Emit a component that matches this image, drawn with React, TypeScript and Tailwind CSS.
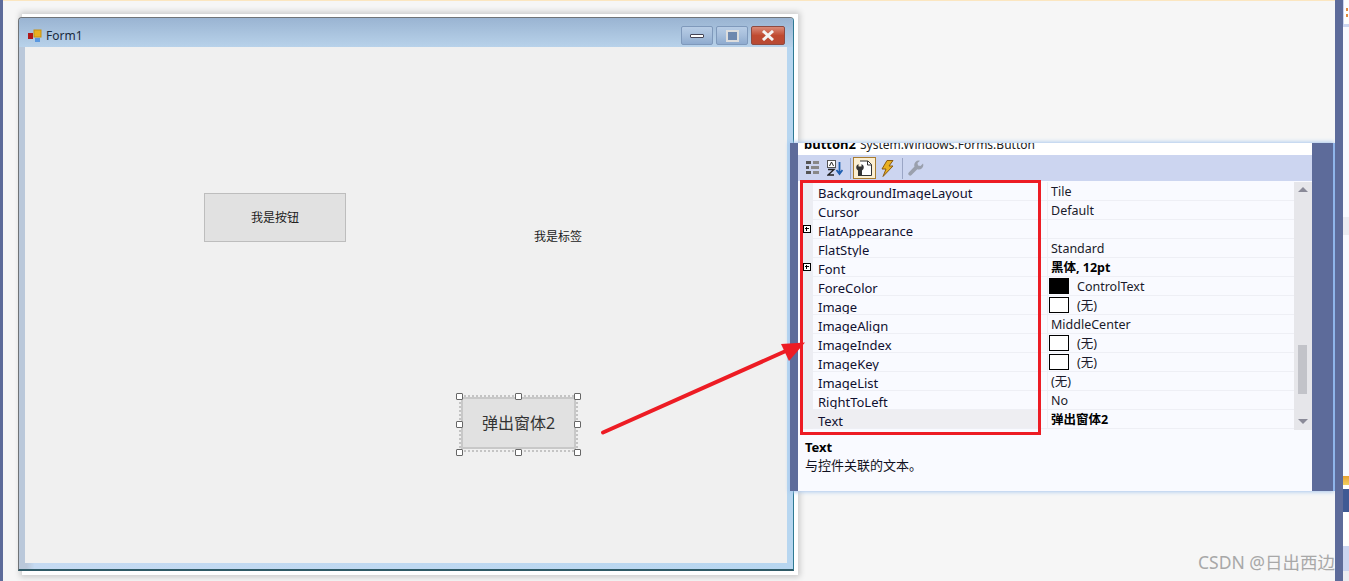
import React from "react";

const sans = "font-['Noto_Sans','Noto_Sans_CJK_SC',sans-serif]";

type Row = { name: string; value?: string; swatch?: "black" | "empty"; bold?: boolean; plus?: boolean; selected?: boolean };

const rows: Row[] = [
  { name: "BackgroundImageLayout", value: "Tile" },
  { name: "Cursor", value: "Default" },
  { name: "FlatAppearance", plus: true },
  { name: "FlatStyle", value: "Standard" },
  { name: "Font", value: "黑体, 12pt", bold: true, plus: true },
  { name: "ForeColor", value: "ControlText", swatch: "black" },
  { name: "Image", value: "(无)", swatch: "empty" },
  { name: "ImageAlign", value: "MiddleCenter" },
  { name: "ImageIndex", value: "(无)", swatch: "empty" },
  { name: "ImageKey", value: "(无)", swatch: "empty" },
  { name: "ImageList", value: "(无)" },
  { name: "RightToLeft", value: "No" },
  { name: "Text", value: "弹出窗体2", bold: true, selected: true },
];

function PropertyRow({ row }: { row: Row }) {
  return (
    <div className="flex h-[19px] shrink-0">
      <div className={`relative w-[12px] shrink-0 ${row.selected ? "bg-[#eeeef2]" : "bg-[#ecedf3]"}`}>
        {row.plus && (
          <span className="absolute left-[2px] top-[5px] h-[8px] w-[8px] border border-black bg-white">
            <span className="absolute left-[1px] top-[2px] h-px w-[4px] bg-black" />
            <span className="absolute left-[2px] top-[1px] h-[4px] w-px bg-black" />
          </span>
        )}
      </div>
      <div className={`w-[227px] shrink-0 overflow-hidden border-b border-[#eeeff5] pl-[5px] text-[13px] leading-[23px] text-[#101030] ${row.selected ? "bg-[#eeeef2]" : ""}`}>
        {row.name}
      </div>
      <div className="w-[7px] shrink-0 border-b border-[#eeeff5]" />
      <div className="flex min-w-0 flex-1 items-center border-b border-l border-[#eeeff5] text-[12.5px] leading-[17px] text-[#1a1a2a]">
        {row.swatch ? (
          <>
            <span className={`ml-[1px] h-[16px] w-[20px] shrink-0 border border-black ${row.swatch === "black" ? "bg-black" : "bg-white"}`} />
            <span className="ml-[8px]">{row.value}</span>
          </>
        ) : (
          <span className={`ml-[3px] ${row.bold ? "font-bold text-black" : ""}`}>{row.value}</span>
        )}
      </div>
    </div>
  );
}

function Toolbar() {
  return (
    <div className="flex h-[26px] shrink-0 items-center bg-[#ccd5f0] pl-[8px]">
      <svg width="14" height="14" viewBox="0 0 14 14" className="shrink-0">
        <rect x="0" y="0" width="5" height="3" fill="#555" />
        <rect x="7" y="0" width="6" height="3" fill="#888" />
        <rect x="0" y="5" width="3" height="3" fill="#555" />
        <rect x="5" y="5" width="8" height="3" fill="#888" />
        <rect x="0" y="10" width="5" height="3" fill="#555" />
        <rect x="7" y="10" width="6" height="3" fill="#888" />
      </svg>
      <svg width="16" height="16" viewBox="0 0 16 16" className="ml-[7px] shrink-0">
        <rect x="0.5" y="0.5" width="8" height="7" fill="#fff" stroke="#555" strokeWidth="1" />
        <path d="M2.5 6 L4.5 2 L6.5 6" fill="none" stroke="#222" strokeWidth="1" />
        <path d="M1 9.5 H7 L1 15 H7" fill="none" stroke="#222" strokeWidth="1.4" />
        <path d="M12.5 2 V13 M9.5 10 L12.5 14 L15.5 10" fill="none" stroke="#1f5fb0" strokeWidth="1.8" />
      </svg>
      <span className="ml-[7px] h-[21px] w-px bg-[#9aa5c5]" />
      <span className="ml-[2px] flex h-[22px] w-[23px] items-center justify-center border border-[#a87c30] bg-[#fbefd2]">
        <svg width="17" height="17" viewBox="0 0 17 17">
          <path d="M4 1 H12 L15.5 4.5 V15.5 H6" fill="#fff" stroke="#333" strokeWidth="1" />
          <path d="M11.5 1 V5 H15.5" fill="none" stroke="#333" strokeWidth="1" />
          <path d="M2.5 4 V6.5 H5.5 V4 A3.6 3.6 0 0 1 6 10.5 V16 H2 V10.5 A3.6 3.6 0 0 1 2.5 4 Z" fill="#333" />
        </svg>
      </span>
      <svg width="15" height="17" viewBox="0 0 15 17" className="ml-[4px] shrink-0">
        <path d="M7 0.5 H13 L9 6 H13 L3 16.5 L6 9 H2 Z" fill="#e8b020" stroke="#8a5a10" strokeWidth="1" />
      </svg>
      <span className="ml-[7px] h-[21px] w-px bg-[#9aa5c5]" />
      <svg width="16" height="16" viewBox="0 0 16 16" className="ml-[5px] shrink-0">
        <path d="M15 3.5 L12.5 6 L10 5.5 L9.5 3 L12 0.7 A4.5 4.5 0 0 0 6.5 6.5 L0.8 12.5 A1.8 1.8 0 0 0 3.5 15 L9.3 9.3 A4.5 4.5 0 0 0 15 3.5 Z" fill="#9aa0ad" />
      </svg>
    </div>
  );
}

function PropertyPanel() {
  return (
    <div className={`absolute left-[790px] top-[143px] flex h-[348px] w-[543px] shadow-[0_0_4px_1px_#a9c8ee] ${sans}`}>
      <div className="w-[8px] shrink-0 bg-[#5d6b9a]" />
      <div className="flex w-[514px] shrink-0 flex-col bg-[#f9faff]">
        <div className="h-[12px] shrink-0 overflow-hidden whitespace-nowrap bg-white pl-[6px] text-[12px] leading-[3px] text-[#222]">
          <b className="text-[13px] text-black">button2</b>
          <span className="ml-[4px]">System.Windows.Forms.Button</span>
        </div>
        <Toolbar />
        <div className="flex h-[249px] shrink-0 pl-[3px] pt-px">
          <div className="flex w-[493px] shrink-0 flex-col">
            {rows.map((r) => (
              <PropertyRow key={r.name} row={r} />
            ))}
          </div>
          <div className="relative w-[18px] shrink-0 bg-[#e6e6ea]">
            <span className="absolute left-[4px] top-[5px] h-0 w-0 border-x-[5px] border-b-[5px] border-x-transparent border-b-[#8a8a98]" />
            <span className="absolute left-[4px] top-[163px] h-[49px] w-[9px] bg-[#c2c3c9]" />
            <span className="absolute left-[4px] top-[237px] h-0 w-0 border-x-[5px] border-t-[5px] border-x-transparent border-t-[#8a8a98]" />
          </div>
        </div>
        <div className="pl-[7px] pt-[8px] text-[13px] leading-[18px] text-[#101020]">
          <div className="font-bold text-black">Text</div>
          <div>与控件关联的文本。</div>
        </div>
      </div>
      <div className="flex-1 bg-[#5d6b9a]" />
    </div>
  );
}

function Handle({ x, y }: { x: number; y: number }) {
  return (
    <span
      className="absolute h-[7px] w-[7px] rounded-[1px] border border-[#666] bg-white"
      style={{ left: x - 3, top: y - 3 }}
    />
  );
}

function CaptionButton({ children, close, w }: { children: React.ReactNode; close?: boolean; w: string }) {
  return (
    <div
      className={`flex h-[19px] items-center justify-center rounded-[2px] border ${w} ${
        close
          ? "border-[#8e4a40] bg-gradient-to-b from-[#d98a78] via-[#c04a30] to-[#b84a34]"
          : "border-[#7f99bb] bg-gradient-to-b from-[#b8cde6] via-[#a6bedb] to-[#8fabcf]"
      }`}
    >
      {children}
    </div>
  );
}

function FormWindow() {
  return (
    <>
      <div className="absolute left-[22px] top-[14px] h-[561px] w-[776px] bg-white shadow-[0_0_6px_2px_rgba(0,0,0,0.18)]" />
      <div className={`absolute left-[18px] top-[17px] flex h-[554px] w-[776px] flex-col rounded-t-[4px] border border-b-2 border-[#707478] border-b-[#2f5a66] border-r-[#2e7a94] bg-gradient-to-r from-[#bac8da] from-[1%] via-[#c5daf2] via-[2%] to-[#b7d6f0] ${sans}`}>
        <div className="flex h-[29px] shrink-0 rounded-t-[4px] bg-gradient-to-b from-[#9ab4d2] to-[#b8d2ea] pl-[9px] pr-[8px]">
          <div className="flex h-full items-center pt-[6px]">
            <svg width="14" height="14" viewBox="0 0 14 14" className="shrink-0">
              <rect x="0" y="4" width="5" height="6" fill="#b01818" />
              <rect x="6" y="1" width="7" height="7" fill="#e8b020" stroke="#c89010" />
              <rect x="7" y="9" width="5" height="4" fill="#5a98e0" />
            </svg>
            <span className="ml-[4px] text-[12px] leading-none text-[#1a2a3c]">Form1</span>
          </div>
          <div className="ml-auto flex gap-[3px] pt-[8px]">
            <CaptionButton w="w-[32px]">
              <span className="h-[4px] w-[14px] rounded-[1px] border border-[#445] bg-white" />
            </CaptionButton>
            <CaptionButton w="w-[32px]">
              <span className="h-[12px] w-[13px] border-2 border-[#ddd] bg-[#6e88ae]" />
            </CaptionButton>
            <CaptionButton w="w-[34px]" close>
              <svg width="14" height="11" viewBox="0 0 14 11">
                <path d="M2 1 L12 10 M12 1 L2 10" stroke="#f4f4f4" strokeWidth="3" />
              </svg>
            </CaptionButton>
          </div>
        </div>
        <div className="flex flex-1 pl-[6px] pr-[6px] pb-[6px]">
          <div className="relative flex-1 bg-[#f0f0f0]">
            <div className="absolute left-[179px] top-[146px] flex h-[49px] w-[142px] items-center justify-center border border-[#bdbdbd] bg-[#e1e1e1] text-[12px] text-[#222]">
              我是按钮
            </div>
            <div className="absolute left-[509px] top-[181px] text-[12px] leading-[17px] text-[#222]">我是标签</div>
            <div className="absolute left-[434px] top-[348px] h-[57px] w-[119px] border-2 border-dotted border-[#c4c4c4]" />
            <div className="absolute left-[436px] top-[350px] flex h-[52px] w-[115px] items-center justify-center border-2 border-[#c8c8c8] bg-[#e1e1e1] text-[16px] text-[#333]">
              弹出窗体2
            </div>
            {[434, 493, 552].map((x) =>
              [349, 377, 405].map((y) =>
                x === 493 && y === 377 ? null : <Handle key={`${x}-${y}`} x={x} y={y} />
              )
            )}
          </div>
        </div>
      </div>
    </>
  );
}

function RightEdge() {
  return (
    <div className="absolute bottom-0 left-[1335px] top-0 flex w-[14px]">
      <div className="w-[8px] shrink-0 bg-[#5d6b9a]" />
      <div className="flex w-[6px] shrink-0 flex-col bg-[#f9faff]">
        <div className="h-[24px] shrink-0 border-l border-[#ccd5f0] bg-white pt-[8px] pl-[2px]">
          <div className="h-[3px] w-[2px] bg-[#e08a40]" />
          <div className="mt-[3px] h-[3px] w-[2px] bg-[#e08a40]" />
        </div>
        <div className="h-[3px] shrink-0 bg-[#ccd5f0]" />
        <div className="h-[190px] shrink-0" />
        <div className="h-[18px] shrink-0 bg-[#ececf2]" />
        <div className="h-[241px] shrink-0" />
        <div className="h-[9px] shrink-0 bg-gradient-to-b from-[#e8a030] to-[#f0d060]" />
        <div className="h-[4px] shrink-0 bg-white" />
        <div className="h-[23px] shrink-0 bg-[#3f5a94]" />
        <div className="h-[34px] shrink-0 bg-white" />
        <div className="h-[25px] shrink-0 bg-[#ccd5f0]" />
        <div className="flex-1 bg-[#eeeef2]" />
      </div>
    </div>
  );
}

export default function App() {
  return (
    <div className="relative h-[581px] w-[1349px] overflow-hidden bg-[#f6f6f6]">
      <div className="absolute inset-x-0 top-0 h-px bg-[#fbe6c0]" />
      <div className="absolute bottom-0 left-0 top-0 w-[3px] bg-[#5d6b9a]" />
      <FormWindow />
      <PropertyPanel />
      <div className="absolute left-[1333px] top-[143px] h-[348px] w-[2px] bg-[#8fb5ea]" />
      <RightEdge />
      <div className="absolute left-[800px] top-[180px] h-[255px] w-[241px] border-[3.5px] border-[#ed1c24]" />
      <svg className="absolute left-[596px] top-[335px]" width="215" height="105" viewBox="0 0 215 105">
        <path d="M7 97.5 L192 15" stroke="#ed1c24" strokeWidth="4" strokeLinecap="round" />
        <path d="M209 7.5 L185 9 L193 26 Z" fill="#ed1c24" />
      </svg>
      <div className="absolute left-[1198px] top-[552px] font-['Noto_Sans','Noto_Sans_CJK_SC',sans-serif] text-[17.5px] leading-[20px] text-[#a8a8a8]">
        CSDN @日出西边
      </div>
    </div>
  );
}
